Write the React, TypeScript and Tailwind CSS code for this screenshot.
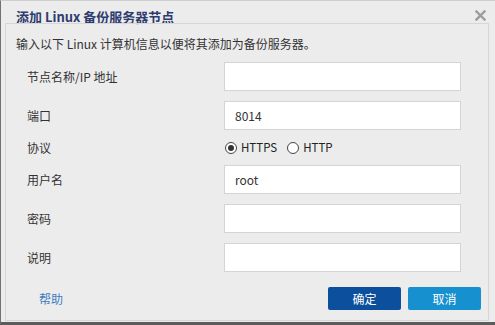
import React from "react";

const font = { fontFamily: '"Noto Sans CJK SC", "Noto Sans", sans-serif' };

function Field({ label, value }: { label: string; value?: string }) {
  return (
    <>
      <div className="flex items-center h-[29px] text-[12px] text-[#333] leading-[16px]">{label}</div>
      <div className="h-[29px] w-[237px] bg-white border border-[#d4d4d4] flex items-center pl-[10px] text-[12px] text-[#333] leading-[16px]">
        {value}
      </div>
    </>
  );
}

function Radio({ checked, label }: { checked?: boolean; label: string }) {
  return (
    <div className="flex items-center gap-[4px]">
      <div className="w-[12px] h-[12px] rounded-full border border-[#444] bg-white flex items-center justify-center">
        {checked && <div className="w-[6px] h-[6px] rounded-full bg-[#333]" />}
      </div>
      <span className="text-[11.5px] text-[#222] leading-[15px]">{label}</span>
    </div>
  );
}

export default function App() {
  return (
    <div
      className="w-[495px] h-[325px] bg-[#ececec] flex flex-col border-l border-l-[#727272] border-t border-t-[#cfcfcf] border-b-[3px] border-b-[#5c5c5c] overflow-hidden"
      style={font}
    >
      <div className="h-[22px] shrink-0 flex items-start justify-between pl-[15px] pr-[9px]">
        <span className="pt-[8px] text-[13px] font-bold text-[#2e3b6f] leading-[16px]">添加 Linux 备份服务器节点</span>
        <svg width="11" height="11" viewBox="0 0 11 11" className="mt-[9px]">
          <path d="M1.5 1.5 L9.5 9.5 M9.5 1.5 L1.5 9.5" stroke="#9c9c9c" strokeWidth="2.4" strokeLinecap="square" />
        </svg>
      </div>
      <div className="flex-1 ml-[4px] mr-[6px] mb-[1px] border border-[#d6d6d6] flex flex-col">
        <div className="pl-[10px] pt-[10px] text-[12px] text-[#333] leading-[20px]">
          输入以下 Linux 计算机信息以便将其添加为备份服务器。
        </div>
        <div className="mt-[8px] pl-[21px] grid grid-cols-[197px_237px] gap-y-[10px]">
          <Field label="节点名称/IP 地址" />
          <Field label="端口" value="8014" />
          <div className="flex items-center h-[15px] text-[12px] text-[#333] leading-[16px]">协议</div>
          <div className="flex items-center h-[15px] gap-[10px] pl-[1px]">
            <Radio checked label="HTTPS" />
            <Radio label="HTTP" />
          </div>
          <Field label="用户名" value="root" />
          <Field label="密码" />
          <Field label="说明" />
        </div>
        <div className="mt-[15px] flex items-center justify-between pl-[33px] pr-[7px]">
          <span className="text-[12px] text-[#3b7cc1] leading-[16px]">帮助</span>
          <div className="flex gap-[7px]">
            <button className="w-[73px] h-[23px] rounded-[2px] bg-[#0b4f9d] text-white text-[12px] leading-[16px]">确定</button>
            <button className="w-[73px] h-[23px] rounded-[2px] bg-[#1690cf] text-white text-[12px] leading-[16px]">取消</button>
          </div>
        </div>
      </div>
    </div>
  );
}
